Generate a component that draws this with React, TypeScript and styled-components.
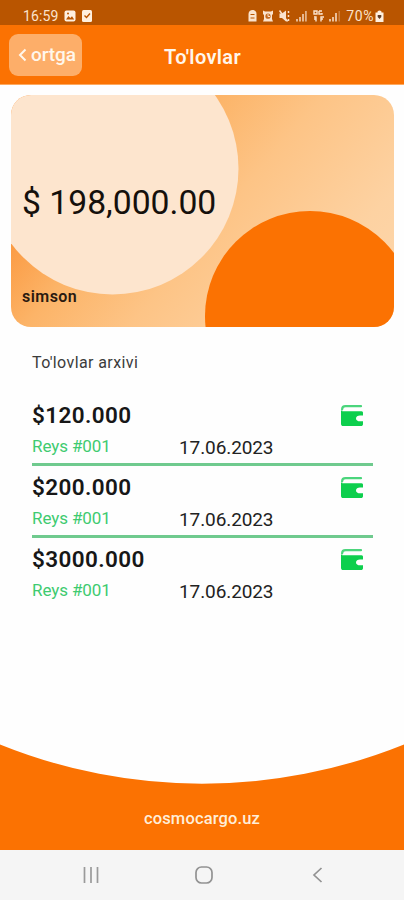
import React from 'react';
import styled, { createGlobalStyle } from 'styled-components';

const GlobalStyle = createGlobalStyle`
  * { box-sizing: border-box; }
  body { margin: 0; background: #fff; font-family: Roboto, sans-serif; }
  svg { display: block; flex: none; }
`;

const Screen = styled.div`
  width: 404px;
  height: 900px;
  display: flex;
  flex-direction: column;
  overflow: hidden;
  background: #fefefe;
`;

const StatusBar = styled.div`
  height: 25px;
  flex: none;
  display: flex;
  align-items: center;
  justify-content: space-between;
  padding: 6px 20px 0 23px;
  background: #b95500;
  color: #fbe3cd;
`;

const StatusGroup = styled.div`
  display: flex;
  align-items: center;
`;

const StatusText = styled.span<{ $spacing?: number }>`
  display: block;
  font-size: 14px;
  line-height: 18px;
  letter-spacing: ${({ $spacing = 0 }) => $spacing}px;
`;

const Header = styled.header`
  height: 60px;
  flex: none;
  display: grid;
  grid-template-columns: 73px 1fr 73px;
  align-items: start;
  padding: 9px 8px 0 9px;
  background: #fb7202;
  border-bottom: 1px solid #fda95f;
`;

const BackButton = styled.button`
  height: 42px;
  border: 0;
  border-radius: 9px;
  padding: 0 0 1px 9px;
  display: flex;
  align-items: center;
  gap: 4px;
  background: #fdae69;
  color: #fff7ec;
  font: 500 19px/22px Roboto, sans-serif;
  letter-spacing: -0.1px;
`;

const Title = styled.h1`
  margin: 11px 0 0;
  text-align: center;
  color: #fff6ec;
  font-size: 20px;
  line-height: 24px;
  font-weight: 600;
  letter-spacing: 0.35px;
`;

const Card = styled.section`
  position: relative;
  height: 232px;
  flex: none;
  margin: 10px 10px 0 11px;
  border-radius: 20px;
  overflow: hidden;
  padding: 88px 11px 0;
  background: linear-gradient(130deg, #fb9640 0%, #fb983f 20%, #fcb468 36%, #fdc486 54%, #fdd2a2 80%, #fdd6ac 100%);
`;

const CardArt = styled.svg`
  position: absolute;
  inset: 0;
`;

const Balance = styled.div`
  position: relative;
  font-size: 33.7px;
  line-height: 40px;
  color: #15100c;
  white-space: nowrap;
`;

const Owner = styled.div`
  position: relative;
  margin-top: 65px;
  font-size: 16px;
  line-height: 18px;
  font-weight: 600;
  letter-spacing: 0.45px;
  color: #2b1a10;
`;

const Archive = styled.section`
  flex: 1;
  padding: 26px 31px 0 32px;
`;

const ArchiveTitle = styled.h2`
  margin: 0 0 21px;
  font-size: 16px;
  line-height: 20px;
  font-weight: 400;
  letter-spacing: 0.4px;
  color: #3b3b3b;
`;

const Payment = styled.article<{ $last?: boolean }>`
  height: 72px;
  display: grid;
  grid-template-columns: 147px 1fr 32px;
  grid-template-rows: 36px 1fr;
  border-bottom: ${({ $last }) => ($last ? '0' : '3px solid #6fca8e')};
`;

const Amount = styled.div`
  grid-column: 1 / 3;
  font-size: 22.5px;
  line-height: 26px;
  padding-top: 8px;
  font-weight: 600;
  letter-spacing: 0.4px;
  color: #171717;
`;

const Flight = styled.div`
  grid-column: 1;
  font-size: 17px;
  line-height: 20px;
  padding-top: 6px;
  letter-spacing: -0.1px;
  color: #3ecb70;
`;

const PayDate = styled.div`
  font-size: 19px;
  line-height: 22px;
  padding-top: 7px;
  letter-spacing: -0.1px;
  color: #222;
`;

const WalletSlot = styled.div`
  padding-top: 11px;
`;

const Footer = styled.footer`
  height: 106px;
  flex: none;
  position: relative;
  display: flex;
  justify-content: center;
  padding-top: 65px;
  color: #ffeed9;
  font-size: 16.5px;
  font-weight: 500;
  letter-spacing: 0.15px;
  line-height: 20px;
`;

const FooterArt = styled.svg`
  position: absolute;
  inset: 0;
`;

const SiteName = styled.span`
  position: relative;
`;

const NavBar = styled.nav`
  height: 50px;
  flex: none;
  display: grid;
  grid-template-columns: 114px 117px 13px;
  align-items: center;
  padding: 0 0 0 80px;
  background: #f5f5f5;
`;

const WalletIcon = () => (
  <svg width="23" height="22" viewBox="0 0 23 22">
    <path d="M20 1.2H4.5C2 1.2 1.1 2.6 1.1 4.5" fill="none" stroke="#4bd57c" strokeWidth="2.2" strokeLinecap="round" />
    <path
      d="M0 4.2C0 6 1 6.2 3 6.2H20.5C21.7 6.2 22 7 22 8V10.5H19C16.7 10.5 15 11.7 15 13.4S16.7 16.3 19 16.3H22V19C22 20.4 21.2 21 20 21H2.3C.8 21 0 20.2 0 18.7Z"
      fill="#0dcf4d"
    />
  </svg>
);

const PhotoIcon = () => (
  <svg width="12" height="12" viewBox="0 0 12 12">
    <rect x=".5" y=".5" width="11" height="11" rx="2" fill="#fff0df" />
    <path d="M2 9.5 4.5 6 6.3 8 8 6.2 10.2 9.5Z" fill="#b95500" />
    <circle cx="4" cy="3.4" r="1" fill="#b95500" />
  </svg>
);

const CheckIcon = () => (
  <svg width="10" height="12" viewBox="0 0 10 12">
    <rect width="10" height="12" rx="1.5" fill="#fff0df" />
    <path d="m2.5 5.5 2 2 3.5-4" fill="none" stroke="#b95500" strokeWidth="1.4" />
  </svg>
);

const SystemIcons = () => (
  <svg width="94" height="14" viewBox="0 0 94 14" fill="#fbe3cd">
    <path d="M.5 5C.5-.3 8.5-.3 8.5 5V12.5H.5Z" />
    <path d="M2.5 5.5h4M2.500 9h4" stroke="#b95500" strokeWidth="1.2" />
    <path d="M15 1.5 17 2.500h6l2-1V5l-1 1v4l1 2.500H15l1-2.500V6l-1-1Z" />
    <circle cx="20" cy="7.2" r="2.6" fill="#c46a20" />
    <path d="M20 5V7.5H22" fill="none" stroke="#fbe3cd" />
    <path d="M31.5 4.5H34l4-3v11L34 9h-2.5Z" />
    <path d="m31.5 1.5 8 11M40.5 2v2m0 2v2m0 2v2" fill="none" stroke="#fbe3cd" strokeWidth="1.5" />
    <path d="M48 10h2v2.5h-2zm3-2h2v4.5h-2zm3-3h2v7.5h-2z" opacity=".7" />
    <path d="M57 2h1.8v10.5H57z" opacity=".65" />
    <path d="M66 2h3v3h-3zm5 0h3M71 2v3h3V4M66 8h2v4.500M66 10h2m5 2.500V8h3m-3 2h2" fill="none" stroke="#fbe3cd" strokeWidth="1.4" />
    <path d="M81 10h2v2.5h-2zm3-2h2v4.5h-2zm3-4h2v8.5h-2z" opacity=".75" />
    <path d="M90.5 2H92v10.5h-1.5z" opacity=".3" />
  </svg>
);

const BatteryIcon = () => (
  <svg width="9" height="12" viewBox="0 0 9 12">
    <path d="M2.5 2.5V1.5Q4.5-.5 6.5 1.5v1H8.5V12H.5V2.5Z" fill="#fff0df" />
    <path d="M2.7 5h3.6v2L4.5 9 2.7 7Z" fill="#5f3e2a" />
  </svg>
);

const IconGap = styled.div<{ $left: number; $top?: number }>`
  margin-left: ${({ $left }) => $left}px;
  margin-top: ${({ $top = 0 }) => $top}px;
`;

const payments = [
  { amount: '$120.000', flight: 'Reys #001', date: '17.06.2023' },
  { amount: '$200.000', flight: 'Reys #001', date: '17.06.2023' },
  { amount: '$3000.000', flight: 'Reys #001', date: '17.06.2023' },
];

export default function App() {
  return (
    <Screen>
      <GlobalStyle />
      <StatusBar>
        <StatusGroup>
          <StatusText $spacing={0.1}>16:59</StatusText>
          <IconGap $left={6}><PhotoIcon /></IconGap>
          <IconGap $left={6}><CheckIcon /></IconGap>
        </StatusGroup>
        <StatusGroup>
          <SystemIcons />
          <IconGap $left={4}><StatusText $spacing={0.6}>70%</StatusText></IconGap>
          <IconGap $left={1} $top={1}><BatteryIcon /></IconGap>
        </StatusGroup>
      </StatusBar>
      <Header>
        <BackButton>
          <svg width="9" height="14" viewBox="0 0 9 14">
            <path d="M7.5 1.5 2 7l5.5 5.5" fill="none" stroke="#fff7ec" strokeWidth="2" />
          </svg>
          ortga
        </BackButton>
        <Title>To'lovlar</Title>
      </Header>
      <Card>
        <CardArt width="383" height="232" viewBox="0 0 383 232">
          <circle cx="101.5" cy="73.5" r="126" fill="#fde5ce" />
          <circle cx="299" cy="221" r="105" fill="#fb7202" />
        </CardArt>
        <Balance>$ 198,000.00</Balance>
        <Owner>simson</Owner>
      </Card>
      <Archive>
        <ArchiveTitle>To'lovlar arxivi</ArchiveTitle>
        {payments.map((p, i) => (
          <Payment key={p.amount} $last={i === payments.length - 1}>
            <Amount>{p.amount}</Amount>
            <WalletSlot><WalletIcon /></WalletSlot>
            <Flight>{p.flight}</Flight>
            <PayDate>{p.date}</PayDate>
          </Payment>
        ))}
      </Archive>
      <Footer>
        <FooterArt width="404" height="106" viewBox="0 0 404 106">
          <path d="M0 .5A540 540 0 0 0 404 .5V106H0Z" fill="#fb7202" />
        </FooterArt>
        <SiteName>cosmocargo.uz</SiteName>
      </Footer>
      <NavBar>
        <svg width="22" height="18" viewBox="0 0 22 18">
          <path d="M4.5 1v16M11 1v16M17.5 1v16" stroke="#9a9a9a" strokeWidth="1.7" />
        </svg>
        <svg width="20" height="20" viewBox="0 0 20 20">
          <rect x="2" y="2" width="16" height="16" rx="5.5" fill="none" stroke="#929292" strokeWidth="1.7" />
        </svg>
        <svg width="13" height="18" viewBox="0 0 13 18">
          <path d="M10.5 2 3 9l7.5 7" fill="none" stroke="#929292" strokeWidth="1.7" />
        </svg>
      </NavBar>
    </Screen>
  );
}
